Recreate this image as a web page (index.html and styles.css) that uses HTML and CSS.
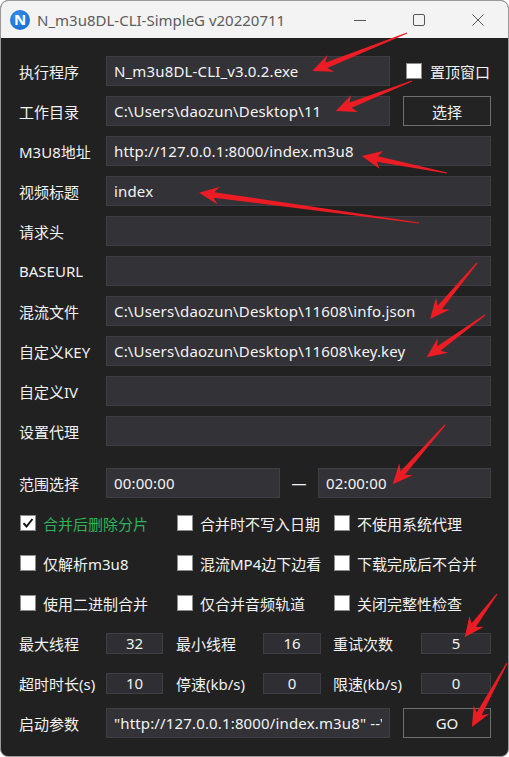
FILE: index.html
```html
<!DOCTYPE html>
<html lang="zh">
<head>
<meta charset="utf-8">
<title>N_m3u8DL-CLI-SimpleG</title>
<link rel="stylesheet" href="styles.css">
</head>
<body>
<div class="window">
  <div class="titlebar">
    <div class="app-icon">N</div>
    <div class="title">N_m3u8DL-CLI-SimpleG v20220711</div>
    <div class="controls">
      <svg class="ctl" width="14" height="14" viewBox="0 0 14 14"><path d="M1 7.5h12" stroke="#555" stroke-width="1"/></svg>
      <svg class="ctl" width="14" height="14" viewBox="0 0 14 14"><rect x="1.5" y="1.5" width="11" height="11" rx="1.5" fill="none" stroke="#555" stroke-width="1"/></svg>
      <svg class="ctl" width="14" height="14" viewBox="0 0 14 14"><path d="M1.5 1.5l11 11M12.5 1.5l-11 11" stroke="#555" stroke-width="1"/></svg>
    </div>
  </div>
  <div class="body">
    <div class="row">
      <div class="label">执行程序</div>
      <div class="field">N_m3u8DL-CLI_v3.0.2.exe</div>
      <div class="side check-side"><span class="box"></span><span class="side-text">置顶窗口</span></div>
    </div>
    <div class="row">
      <div class="label">工作目录</div>
      <div class="field">C:\Users\daozun\Desktop\11</div>
      <div class="side btn">选择</div>
    </div>
    <div class="row">
      <div class="label">M3U8地址</div>
      <div class="field">http://127.0.0.1:8000/index.m3u8</div>
    </div>
    <div class="row">
      <div class="label">视频标题</div>
      <div class="field">index</div>
    </div>
    <div class="row">
      <div class="label">请求头</div>
      <div class="field"></div>
    </div>
    <div class="row">
      <div class="label">BASEURL</div>
      <div class="field"></div>
    </div>
    <div class="row">
      <div class="label">混流文件</div>
      <div class="field">C:\Users\daozun\Desktop\11608\info.json</div>
    </div>
    <div class="row">
      <div class="label">自定义KEY</div>
      <div class="field">C:\Users\daozun\Desktop\11608\key.key</div>
    </div>
    <div class="row">
      <div class="label">自定义IV</div>
      <div class="field"></div>
    </div>
    <div class="row">
      <div class="label">设置代理</div>
      <div class="field"></div>
    </div>
    <div class="row range-row">
      <div class="label">范围选择</div>
      <div class="field range">00:00:00</div>
      <div class="dash">—</div>
      <div class="field range">02:00:00</div>
    </div>
    <div class="checks">
      <div class="chk on"><span class="box"><svg width="14" height="14" viewBox="0 0 14 14"><path d="M2.5 7.2l3 3.3 6-7.5" fill="none" stroke="#111" stroke-width="2"/></svg></span><span>合并后删除分片</span></div>
      <div class="chk"><span class="box"></span><span>合并时不写入日期</span></div>
      <div class="chk"><span class="box"></span><span>不使用系统代理</span></div>
      <div class="chk"><span class="box"></span><span>仅解析m3u8</span></div>
      <div class="chk"><span class="box"></span><span>混流MP4边下边看</span></div>
      <div class="chk"><span class="box"></span><span>下载完成后不合并</span></div>
      <div class="chk"><span class="box"></span><span>使用二进制合并</span></div>
      <div class="chk"><span class="box"></span><span>仅合并音频轨道</span></div>
      <div class="chk"><span class="box"></span><span>关闭完整性检查</span></div>
    </div>
    <div class="nums">
      <div class="label">最大线程</div><div class="num n1">32</div>
      <div class="label l2">最小线程</div><div class="num n2">16</div>
      <div class="label l3">重试次数</div><div class="num n3">5</div>
    </div>
    <div class="nums">
      <div class="label">超时时长(s)</div><div class="num n1">10</div>
      <div class="label l2">停速(kb/s)</div><div class="num n2">0</div>
      <div class="label l3">限速(kb/s)</div><div class="num n3">0</div>
    </div>
    <div class="row launch">
      <div class="label">启动参数</div>
      <div class="field clip"><span class="clip-text">"http://127.0.0.1:8000/index.m3u8" --\</span></div>
      <div class="side btn">GO</div>
    </div>
  </div>
  <svg class="arrows" width="509" height="757" viewBox="0 0 509 757">
    <g fill="#ec1c24">
      <polygon transform="translate(407 33) rotate(158.2)" points="0,-0.6 87,-2.8 82,-9 102,0 82,9 87,2.8 0,0.6"/>
      <polygon transform="translate(412 81) rotate(158.5)" points="0,-0.6 66,-2.8 62,-9 82,0 62,9 66,2.8 0,0.6"/>
      <polygon transform="translate(447 173) rotate(191.3)" points="0,-0.6 71,-2.8 67,-9 87,0 67,9 71,2.8 0,0.6"/>
      <polygon transform="translate(419 223) rotate(187.8)" points="0,-0.6 207,-2.8 202,-9 222,0 202,9 207,2.8 0,0.6"/>
      <polygon transform="translate(477 263) rotate(130)" points="0,-0.6 58,-2.8 53,-9 73,0 53,9 58,2.8 0,0.6"/>
      <polygon transform="translate(485 315) rotate(144.1)" points="0,-0.6 57,-2.8 52,-9 72,0 52,9 57,2.8 0,0.6"/>
      <polygon transform="translate(445 425) rotate(131.4)" points="0,-0.6 64,-2.8 59,-9 79,0 59,9 64,2.8 0,0.6"/>
      <polygon transform="translate(497 594) rotate(126.7)" points="0,-0.6 39,-2.8 34,-9 54,0 34,9 39,2.8 0,0.6"/>
      <polygon transform="translate(507 663) rotate(118.7)" points="0,-0.6 58,-2.8 53,-9 73,0 53,9 58,2.8 0,0.6"/>
    </g>
  </svg>
</div>
</body>
</html>
```
FILE: styles.css
```css
html, body {
  margin: 0;
  padding: 0;
  background: #ffffff;
}
body {
  width: 509px;
  height: 757px;
  overflow: hidden;
  font-family: "Noto Sans", "Noto Sans CJK SC", sans-serif;
}
.window {
  position: relative;
  width: 509px;
  height: 757px;
  box-sizing: border-box;
  border: 1px solid #9a9a9a;
  border-radius: 8px;
  overflow: hidden;
  background: #212121;
}
.titlebar {
  height: 37px;
  background: #f3f3f3;
  display: flex;
  align-items: center;
  padding-left: 9px;
}
.app-icon {
  width: 20px;
  height: 20px;
  border-radius: 50%;
  background: radial-gradient(circle at 40% 35%, #3a8ff0, #0d63c9);
  color: #fff;
  font-size: 15px;
  font-weight: 700;
  display: flex;
  align-items: center;
  justify-content: center;
  line-height: 1;
}
.title {
  margin-left: 7px;
  font-size: 15px;
  color: #5c5c5c;
}
.controls {
  margin-left: auto;
  display: flex;
  align-items: center;
  gap: 45px;
  padding-right: 23px;
}
.ctl { display: block; }
.body {
  padding: 18px 17px 0 18px;
  color: #f2f2f2;
  font-size: 15px;
}
.row {
  display: flex;
  align-items: center;
  height: 30px;
  margin-bottom: 10px;
}
.label {
  width: 87px;
  flex: none;
  white-space: nowrap;
  font-size: 15px;
  color: #f2f2f2;
}
.field {
  flex: 1;
  min-width: 0;
  height: 30px;
  box-sizing: border-box;
  background: #323237;
  border: 1px solid #3e3e44;
  padding: 0 7px;
  display: flex;
  align-items: center;
  font-size: 15px;
  letter-spacing: 0.15px;
  color: #f4f4f4;
  white-space: nowrap;
  overflow: hidden;
}
.side {
  width: 88px;
  flex: none;
  margin-left: 13px;
}
.check-side {
  display: flex;
  align-items: center;
  margin-left: 16px;
  width: 85px;
}
.check-side .side-text { margin-left: 8px; }
.box {
  width: 16px;
  height: 16px;
  box-sizing: border-box;
  background: #ffffff;
  border: 1px solid #8c8c8c;
  flex: none;
  display: flex;
  align-items: center;
  justify-content: center;
}
.btn {
  height: 30px;
  box-sizing: border-box;
  border: 1px solid #6e6e6e;
  background: #232323;
  display: flex;
  align-items: center;
  justify-content: center;
  color: #f2f2f2;
}
.range-row {
  margin-top: 22px;
  margin-bottom: 5px;
}
.range-row .field.range { flex: none; width: 174px; }
.range-row .field.range:last-child { flex: 1; }
.dash {
  width: 38px;
  flex: none;
  text-align: center;
}
.checks {
  display: grid;
  grid-template-columns: 157px 157px 1fr;
  grid-auto-rows: 40px;
  margin-left: 1px;
}
.chk {
  display: flex;
  align-items: center;
  gap: 7px;
  white-space: nowrap;
}
.chk.on { color: #2fb35a; }
.nums {
  display: flex;
  align-items: center;
  height: 40px;
}
.num {
  height: 21px;
  box-sizing: border-box;
  background: #2e2e33;
  border: 1px solid #3e3e44;
  display: flex;
  align-items: center;
  justify-content: center;
  flex: none;
}
.n1 { width: 57px; }
.n2 { width: 58px; }
.n3 { width: 70px; }
.nums .l2 { margin-left: 13px; width: 87px; }
.nums .l3 { margin-left: 12px; width: 88px; }
.launch { margin-top: 5px; }
.clip-text {
  display: block;
  overflow: hidden;
  white-space: nowrap;
}
.arrows {
  position: absolute;
  top: -1px;
  left: -1px;
  pointer-events: none;
}
```
